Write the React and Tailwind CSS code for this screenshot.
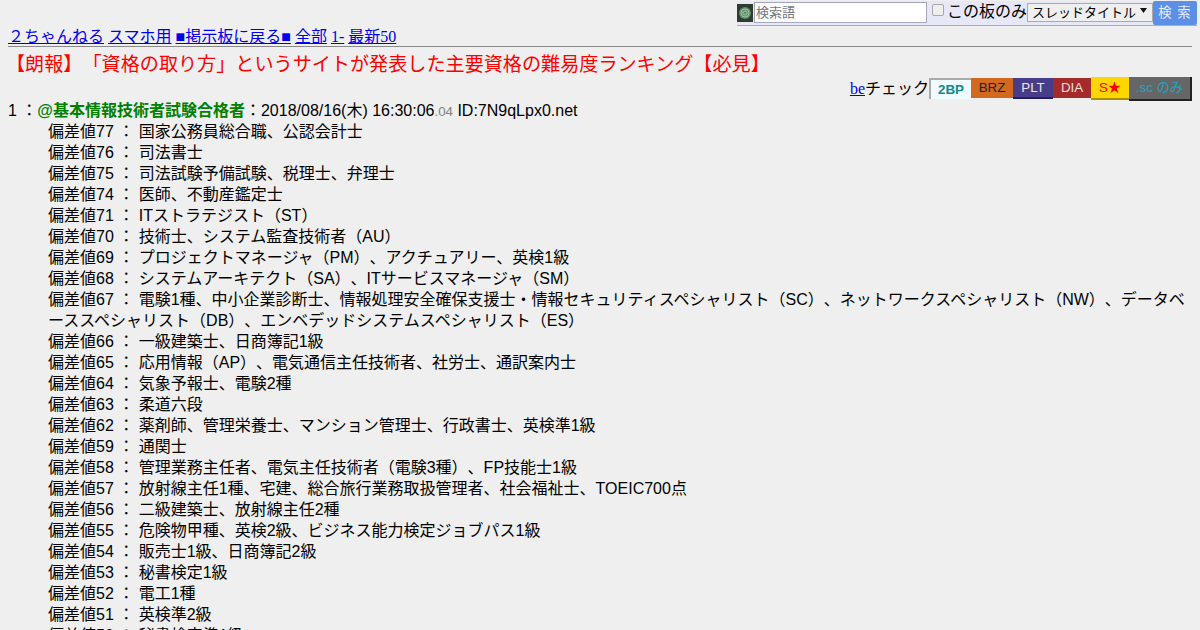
const rows = [
  ["77", "国家公務員総合職、公認会計士"],
  ["76", "司法書士"],
  ["75", "司法試験予備試験、税理士、弁理士"],
  ["74", "医師、不動産鑑定士"],
  ["71", "ITストラテジスト（ST）"],
  ["70", "技術士、システム監査技術者（AU）"],
  ["69", "プロジェクトマネージャ（PM）、アクチュアリー、英検1級"],
  ["68", "システムアーキテクト（SA）、ITサービスマネージャ（SM）"],
  ["67", "電験1種、中小企業診断士、情報処理安全確保支援士・情報セキュリティスペシャリスト（SC）、ネットワークスペシャリスト（NW）、データベーススペシャリスト（DB）、エンベデッドシステムスペシャリスト（ES）"],
  ["66", "一級建築士、日商簿記1級"],
  ["65", "応用情報（AP）、電気通信主任技術者、社労士、通訳案内士"],
  ["64", "気象予報士、電験2種"],
  ["63", "柔道六段"],
  ["62", "薬剤師、管理栄養士、マンション管理士、行政書士、英検準1級"],
  ["59", "通関士"],
  ["58", "管理業務主任者、電気主任技術者（電験3種）、FP技能士1級"],
  ["57", "放射線主任1種、宅建、総合旅行業務取扱管理者、社会福祉士、TOEIC700点"],
  ["56", "二級建築士、放射線主任2種"],
  ["55", "危険物甲種、英検2級、ビジネス能力検定ジョブパス1級"],
  ["54", "販売士1級、日商簿記2級"],
  ["53", "秘書検定1級"],
  ["52", "電工1種"],
  ["51", "英検準2級"],
  ["50", "秘書検定準1級"],
];
const sans = "font-['Liberation_Sans','Noto_Sans_CJK_JP',sans-serif]";

function Badge({ cls, children }) {
  return <span className={`flex items-center justify-center font-['Liberation_Sans','Noto_Sans_CJK_JP',sans-serif] text-[13.33px] ${cls}`}>{children}</span>;
}

export default function App() {
  return (
    <div className="h-[630px] overflow-hidden bg-[#efefef] font-['Liberation_Serif','Noto_Sans_CJK_JP',serif] text-[16px] text-black [text-spacing-trim:space-all]">
      <div className="flex justify-end pr-[3px] pt-[1px]">
        <div className="flex h-[25px] w-[460px] items-start border-b border-[#a9a9d0] bg-[#e6e8f8]">
          <svg width="16" height="18" viewBox="0 0 16 18" className="mt-[3px] shrink-0">
            <rect width="16" height="18" fill="#2f3a30" />
            <circle cx="8" cy="9" r="6" fill="#5f8f68" />
            <circle cx="8" cy="9" r="4" fill="none" stroke="#9cc6a0" />
            <circle cx="8" cy="9" r="2" fill="none" stroke="#9cc6a0" />
          </svg>
          <input
            placeholder="検索語"
            className={`mt-[1px] ml-[1px] box-border h-[21px] w-[173px] shrink-0 border border-[#a6a6bf] bg-white px-[1px] text-[13px] placeholder:text-[#777] ${sans}`}
          />
          <span className="mt-[3px] ml-[5px] h-[12px] w-[12px] shrink-0 rounded-[2px] border border-[#a8a8a8] bg-[#efefef]" />
          <span className={`ml-[3px] shrink-0 text-[16px] leading-[22px] whitespace-nowrap ${sans}`}>この板のみ</span>
          <span className={`mt-[2px] flex h-[19px] w-[126px] shrink-0 items-center border border-[#aaa] bg-[#efefef] pl-[4px] text-[13px] whitespace-nowrap ${sans}`}>
            スレッドタイトル
            <svg width="7" height="5" viewBox="0 0 7 5" className="mb-[5px] ml-[4px]"><path d="M0 0h7L3.5 5z" fill="#111" /></svg>
          </span>
          <span className={`flex h-[24px] w-[44px] shrink-0 items-center justify-center rounded-[2px] bg-[#5c8fe6] text-[13.33px] tracking-[1px] whitespace-nowrap text-[#e4ecff] ${sans}`}>検 索</span>
        </div>
      </div>
      <div className="px-[8px]">
        <div className="h-[20px] leading-[21px] text-[#0000ee]">
          <a className="underline">２ちゃんねる</a>{" "}
          <a className="underline">スマホ用</a>{" "}
          <a className="underline">■掲示板に戻る■</a>{" "}
          <a className="underline">全部</a>{" "}
          <a className="underline">1-</a>{" "}
          <a className="underline">最新50</a>
        </div>
        <hr className="h-[1px] border-0 bg-[#8a8a8a]" />
        <h1 className={`mt-[6px] -ml-[2px] h-[24px] text-[19.12px] leading-[24px] font-normal text-[#ff0000] ${sans}`}>
          【朗報】「資格の取り方」というサイトが発表した主要資格の難易度ランキング【必見】
        </h1>
        <div className="flex h-[24px] items-start justify-end">
          <a className="leading-[24px] text-[#0000ee] underline">be</a>
          <span className={`leading-[24px] ${sans}`}>チェック</span>
          <Badge cls="mt-[1px] h-[21px] w-[42px] border-t-2 border-l-2 border-[#aaa] bg-[#f0fbff] font-bold text-[#118a8a]">2BP</Badge>
          <Badge cls="mt-[1px] h-[20px] w-[42px] bg-[#d2691e] text-[#222]">BRZ</Badge>
          <Badge cls="mt-[1px] h-[21px] w-[40px] border-b-2 border-[#221e60] bg-[#483d8b] text-[#e6e6e6]">PLT</Badge>
          <Badge cls="mt-[1px] h-[20px] w-[38px] bg-[#a52a2a] text-[#eedddd]">DIA</Badge>
          <Badge cls="h-[23px] w-[38px] border-b-2 border-[#a89000] bg-[#ffd700] text-[#ff0000]">S★</Badge>
          <Badge cls="h-[24px] w-[63px] border-r-2 border-b-2 border-[#222] bg-[#666] text-[#1fa5c4]">.sc のみ</Badge>
        </div>
        <div className={`-mt-[1px] leading-[21px] ${sans}`}>
          <div className="h-[21px]">
            1 ：<span className="font-bold text-[#008000]">@基本情報技術者試験合格者</span>：2018/08/16(木) 16:30:06<span className="text-[13.33px] text-[#808080]">.04</span> ID:7N9qLpx0.net
          </div>
          <div className="pl-[40px]">
            {rows.map(([n, t]) => (
              <div key={n}>偏差値{n} ： {t}</div>
            ))}
          </div>
        </div>
      </div>
    </div>
  );
}
